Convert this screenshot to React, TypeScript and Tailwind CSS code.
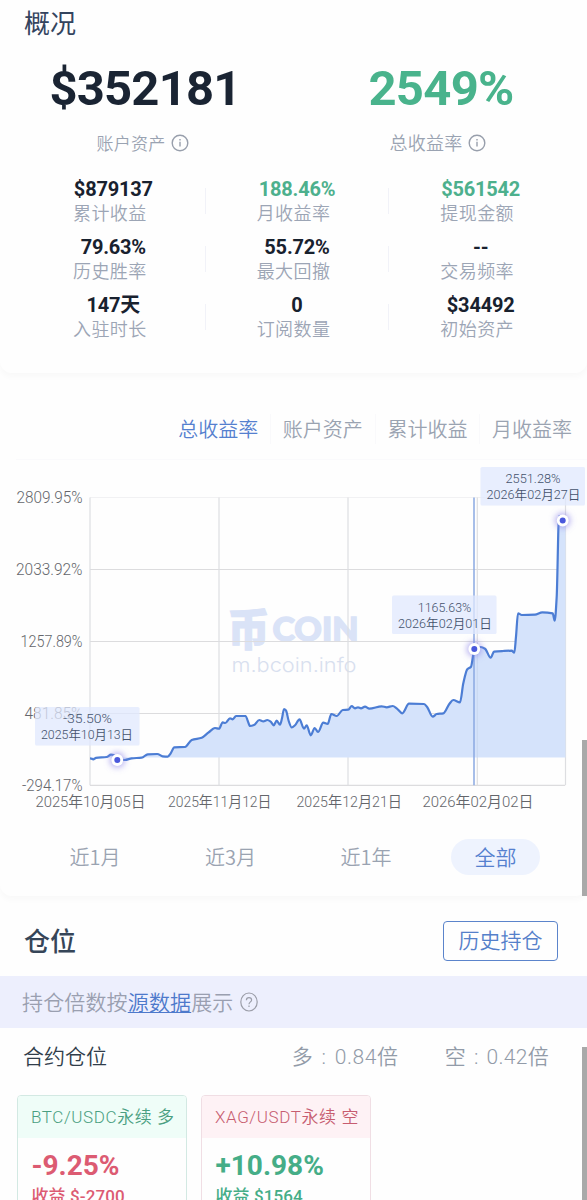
import React from 'react'

type Stat = {
    value: string
    label: string
    positive?: boolean
}

type Point = [number, number]

type Marker = {
    x: number
    y: number
    boxX: number
    boxY: number
    value: string
    valueWidth: number
    date: string
}

type Position = {
    pair: string
    percent: string
    profit: string
    side: 'long' | 'short'
    gain: boolean
}

const stats: Stat[][] = [
    [
        { value: '$879137', label: '累计收益' },
        { value: '188.46%', label: '月收益率', positive: true },
        { value: '$561542', label: '提现金额', positive: true },
    ],
    [
        { value: '79.63%', label: '历史胜率' },
        { value: '55.72%', label: '最大回撤' },
        { value: '--', label: '交易频率' },
    ],
    [
        { value: '147天', label: '入驻时长' },
        { value: '0', label: '订阅数量' },
        { value: '$34492', label: '初始资产' },
    ],
]

const tabs = ['总收益率', '账户资产', '累计收益', '月收益率']
const ranges = ['近1月', '近3月', '近1年', '全部']

const positions: Position[] = [
    { pair: 'BTC/USDC永续 多', percent: '-9.25%', profit: '收益 $-2700', side: 'long', gain: false },
    { pair: 'XAG/USDT永续 空', percent: '+10.98%', profit: '收益 $1564', side: 'short', gain: true },
]

// chart coordinates, relative to the top of the svg (y = 462 on the page)
const CHART_TOP = 462

const yAxis = [
    { label: '2809.95%', y: 497.5, x: 16.5, width: 66 },
    { label: '2033.92%', y: 569.5, x: 16, width: 66.5 },
    { label: '1257.89%', y: 641.5, x: 20.5, width: 62 },
    { label: '481.85%', y: 713.5, x: 24.5, width: 58 },
    { label: '-294.17%', y: 785.5, x: 22, width: 60.5 },
]

const xAxis = [
    { label: '2025年10月05日', x: 35.5, width: 110 },
    { label: '2025年11月12日', x: 168, width: 103.5 },
    { label: '2025年12月21日', x: 296.5, width: 105.5 },
    { label: '2026年02月02日', x: 422.5, width: 111 },
]

const series: Point[] = [
    [90, 758.3], [93.3, 759.3], [96, 757.9], [106.7, 757], [111, 754.7], [114, 755], [117.3, 760],
    [125, 760], [131.7, 758.3], [141.7, 757.7], [147.7, 754.3], [157.3, 754], [162.7, 756.3],
    [167.7, 756.7], [170.7, 753.3], [174.3, 747.3], [185, 747], [191.7, 740], [201.7, 737.7],
    [208.3, 732.7], [215, 728], [219, 728.7], [222.7, 722.3], [225.3, 723], [230, 718.3],
    [232.7, 719.3], [236, 716], [245.7, 716], [247.7, 720.7], [250, 726], [254, 725], [259.3, 720],
    [263.3, 721.3], [267.3, 720], [270.7, 721.7], [273.7, 725.3], [276.7, 720.7], [280, 724.7],
    [282, 718.3], [284, 709], [286, 710.5], [288.7, 721], [291.7, 727.5], [295, 725.3],
    [299.5, 719.3], [304, 728.7], [306.7, 725.3], [310.7, 735.3], [314.7, 728], [318, 732],
    [323.3, 722.7], [327.7, 724], [331.3, 714], [336.7, 716], [342.7, 710], [348.3, 709.7],
    [351.7, 706], [355, 708.3], [358, 707.3], [361, 708.3], [365, 706.7], [369.3, 708.7],
    [381.7, 706.3], [386.7, 707.3], [392.7, 706], [396.7, 708.3], [402.3, 713.3], [409, 703.7],
    [424, 704], [427.3, 707.3], [432.7, 716.7], [436.7, 714], [443.3, 713.3], [449.3, 704],
    [453.3, 700], [460, 702.3], [463.3, 683.3], [467.3, 669.3], [471, 666.7], [474.3, 650],
    [480.7, 647], [485, 648.7], [490.7, 657.7], [494, 651.7], [503, 651], [511.7, 650.7],
    [514.3, 652.7], [516, 636.7], [518, 613.3], [521.7, 615], [535, 614.7], [542.3, 612.3],
    [552.7, 613.3], [554.7, 620.7], [556.7, 596.7], [559, 516], [562.7, 520.7],
]

const markers: Marker[] = [
    { x: 117.3, y: 760, boxX: 35, boxY: 707, value: '-35.50%', valueWidth: 49, date: '2025年10月13日' },
    { x: 474.3, y: 649, boxX: 392, boxY: 595.5, value: '1165.63%', valueWidth: 53.5, date: '2026年02月01日' },
    { x: 562.7, y: 520.5, boxX: 480.5, boxY: 467, value: '2551.28%', valueWidth: 55, date: '2026年02月27日' },
]

// slope at a point, flat at local extremes so the curve never overshoots
function slopeAt(points: Point[], i: number) {
    if (i === 0 || i === points.length - 1) {
        return 0
    }
    const before = (points[i][1] - points[i - 1][1]) / (points[i][0] - points[i - 1][0])
    const after = (points[i + 1][1] - points[i][1]) / (points[i + 1][0] - points[i][0])
    if (before * after <= 0) {
        return 0
    }
    return (2 * before * after) / (before + after)
}

function smoothPath(points: Point[]) {
    let d = `M${points[0][0]} ${points[0][1]}`
    for (let i = 1; i < points.length; i++) {
        const [px, py] = points[i - 1]
        const [x, y] = points[i]
        const third = (x - px) / 3
        const y1 = py + slopeAt(points, i - 1) * third
        const y2 = y - slopeAt(points, i) * third
        d += ` C${px + third} ${y1} ${x - third} ${y2} ${x} ${y}`
    }
    return d
}

function InfoIcon({ className }: { className?: string }) {
    return (
        <svg className={className} width="18" height="18" viewBox="0 0 18 18" fill="none" stroke="#989fac" strokeWidth="1.4">
            <circle cx="9" cy="9" r="7.8" />
            <path d="M9 7.8v4.8M9 5v1.5" strokeWidth="1.4" />
        </svg>
    )
}

function HelpIcon() {
    return (
        <svg className="ml-[6px]" width="18" height="20" viewBox="0 0 18 20" fill="none" stroke="#9b9da8" strokeWidth="1.2">
            <ellipse cx="9" cy="10" rx="8.2" ry="9" />
            <path d="M6.4 8.2C6.4 6.5 7.5 5.6 9 5.6s2.6.9 2.6 2.4c0 1.8-2.6 2-2.6 4.2M9 13.4v1.5" />
        </svg>
    )
}

function Overview() {
    return (
        <section className="h-[373px] rounded-b-xl shadow-[0_4px_6px_rgba(0,0,0,0.025)]">
            <h2 className="h-[46px] pl-6 text-[26px] leading-[43px] font-normal text-[#34445e]">概况</h2>
            <div className="grid grid-cols-[284px_1fr] text-center">
                <div>
                    <div className="h-[84px] pl-[6px] font-[Roboto] text-[49px] leading-[85px] font-bold tracking-[-0.8px] text-[#1a2433]">$352181</div>
                    <div className="flex h-[27px] items-center justify-center pl-px">
                        <span className="-mt-[2px] text-[17px] tracking-[0.3px] text-[#9aa3b2]">账户资产</span>
                        <InfoIcon className="-mt-px ml-[5px]" />
                    </div>
                </div>
                <div>
                    <div className="h-[84px] pl-[11px] font-[Roboto] text-[49px] leading-[85px] font-bold tracking-[-0.7px] text-[#49b38c]">2549%</div>
                    <div className="flex h-[27px] items-center justify-center pl-1">
                        <span className="-mt-[2px] text-[18px] tracking-[0.3px] text-[#9aa3b2]">总收益率</span>
                        <InfoIcon className="-mt-px ml-[5px]" />
                    </div>
                </div>
            </div>
            <div className="mt-[19px] flex flex-col gap-2 px-[18px]">
                {stats.map((row, index) => (
                    <div key={index} className="grid h-[50px] grid-cols-3 text-center">
                        {row.map((stat, column) => (
                            <div key={stat.label} className="relative">
                                <div className={`h-[26px] pl-[7px] font-[Roboto,'Noto_Sans_CJK_SC'] text-[20px] leading-[26px] font-bold tracking-[-0.2px] ${stat.positive ? 'text-[#4db08d]' : 'text-[#18212e]'}`}>
                                    {stat.value}
                                </div>
                                <div className="h-6 text-[18px] leading-[21px] tracking-[0.4px] text-[#9ca5b5]">{stat.label}</div>
                                {column < 2 && (
                                    <span className="absolute top-[12px] right-[-4px] h-[26px] w-px bg-[#f1f2f8]" />
                                )}
                            </div>
                        ))}
                    </div>
                ))}
            </div>
        </section>
    )
}

function ProfitChart() {
    const line = smoothPath(series)
    return (
        <svg className="block" width="587" height="358" viewBox={`0 ${CHART_TOP} 587 358`} fill="none">
            <defs>
                <filter id="glow" x="-100%" y="-100%" width="300%" height="300%">
                    <feGaussianBlur stdDeviation="3" />
                </filter>
            </defs>

            {/* Watermark */}
            <g fill="#dae3f7">
                <text transform="translate(227.5 645.5) scale(1 1.06)" fontSize="42" fontWeight="900" fontFamily="'Noto Sans CJK SC', sans-serif" stroke="#dae3f7" strokeWidth="1">币</text>
                <text x="272.5" y="641" fontSize="32" fontWeight="900" fontFamily="Lato, sans-serif" stroke="#dae3f7" strokeWidth="1.4" textLength="86" lengthAdjust="spacingAndGlyphs">COIN</text>
                <text x="231.5" y="672" fontSize="20" fontFamily="Inter, sans-serif" fontWeight="350" textLength="125" lengthAdjust="spacingAndGlyphs" fill="#d8e0ef">m.bcoin.info</text>
            </g>

            {/* Grid */}
            <g stroke="#dcdcde" strokeWidth="1.2">
                <path d="M90 497.5H565" stroke="#f1f1f3" />
                <path d="M90 569.5H565M90 641.5H565M90 713.5H565M90 785.3H565" />
                <path d="M90 497.5V785.3M219 497.5V785.3M348 497.5V785.3M477.3 497.5V785.3M565.5 497.5V785.3" stroke="#dddee1" />
            </g>

            {/* Series */}
            <path d={`${line} L565.5 520.7 V757.5 H90 Z`} fill="#d5e3fb" />
            <path d="M477.3 650V757.5" stroke="#c9d8f1" />
            <path d="M474 497.5V785.3" stroke="#8aa9e2" strokeWidth="1.5" />
            <path d={line} stroke="#4c7dd4" strokeWidth="2.2" strokeLinejoin="round" />

            {/* Axis labels */}
            <g fill="#64666b" fontSize="16" fontFamily="Roboto, 'Noto Sans CJK SC', sans-serif" fontWeight="350">
                {yAxis.map((tick) => (
                    <text key={tick.label} x={tick.x} y={tick.y + 5.2} textLength={tick.width} lengthAdjust="spacingAndGlyphs">
                        {tick.label}
                    </text>
                ))}
                {xAxis.map((tick) => (
                    <text key={tick.label} x={tick.x} y="806.7" fontSize="15" textLength={tick.width} lengthAdjust="spacingAndGlyphs">
                        {tick.label}
                    </text>
                ))}
            </g>

            {/* Markers */}
            {markers.map((marker) => (
                <g key={marker.date}>
                    <rect x={marker.boxX} y={marker.boxY} width="104.5" height="38.5" rx="1.5" fill="#e0e8fd" fillOpacity="0.75" />
                    <g fill="#44526c" fontSize="13" fontFamily="Roboto, 'Noto Sans CJK SC', sans-serif">
                        <text x={marker.boxX + 52.5 - marker.valueWidth / 2} y={marker.boxY + 16.3} textLength={marker.valueWidth} lengthAdjust="spacingAndGlyphs">
                            {marker.value}
                        </text>
                        <text x={marker.boxX + 6} y={marker.boxY + 32} textLength={marker.date === '2025年10月13日' ? 92 : 94} lengthAdjust="spacingAndGlyphs">
                            {marker.date}
                        </text>
                    </g>
                    <circle cx={marker.x} cy={marker.y} r="7.5" fill="#8a7fe8" fillOpacity="0.65" filter="url(#glow)" />
                    <circle cx={marker.x} cy={marker.y} r="5.9" fill="#fff" />
                    <circle cx={marker.x} cy={marker.y} r="3" fill="#4a58dc" />
                </g>
            ))}
        </svg>
    )
}

function ChartSection() {
    return (
        <section className="relative h-[523px] rounded-b-xl pt-[26px] shadow-[0_4px_6px_rgba(0,0,0,0.025)]">
            <div className="ml-4 flex h-[61px] items-center justify-end border-b border-[#fafafc] pr-[15px]">
                {tabs.map((tab, index) => (
                    <div
                        key={tab}
                        className={`text-[20px] ${index === 0
                            ? 'text-[#5580cf]'
                            : 'ml-3 border-l border-[#f9f9fb] pl-[11.6px] text-[#9aa3b1]'}`}
                    >
                        {tab}
                    </div>
                ))}
            </div>
            <div className="mt-[2px]">
                <ProfitChart />
            </div>
            <div className="mt-[19px] grid grid-cols-[136px_135px_136px_123px] pl-[27px] text-center text-[20px] leading-[35px]">
                {ranges.map((range, index) => (
                    <div key={range} className="flex h-9 justify-center">
                        <span className={index === 3
                            ? 'w-[89px] rounded-full bg-[#eef3fe] text-[21px] text-[#5580cf]'
                            : 'text-[#9aa3b1]'}
                        >
                            {range}
                        </span>
                    </div>
                ))}
            </div>
            <span className="absolute right-0 bottom-0 h-[156px] w-[5px] bg-[#a9a9a9]" />
        </section>
    )
}

function PositionCard({ position }: { position: Position }) {
    const long = position.side === 'long'
    return (
        <div className={`h-[170px] w-[170px] shrink-0 overflow-hidden rounded-[4px] border ${long ? 'border-[#d3e9e3]' : 'border-[#f0dee4]'}`}>
            <div className={`h-[42px] pl-[13px] font-[Roboto,'Noto_Sans_CJK_SC'] text-[17px] leading-[42px] tracking-[0.6px] whitespace-nowrap ${long ? 'bg-[#effdf8] text-[#4a9f81]' : 'bg-[#fef2f5] text-[#c75d70]'}`}>
                {position.pair}
            </div>
            <div className={`pl-[13.5px] font-[Roboto,'Noto_Sans_CJK_SC'] font-bold ${position.gain ? 'text-[#45ad87]' : 'text-[#dc5b72]'}`}>
                <div className="h-[44px] pt-[9px] text-[28px] leading-[37px]">{position.percent}</div>
                <div className="pt-[2px] text-[17px] leading-6 font-medium tracking-[0.1px]">{position.profit}</div>
            </div>
        </div>
    )
}

function Positions() {
    return (
        <section className="relative h-[304px]">
            <div className="flex h-[80px] items-center justify-between pt-[10px] pr-[29px] pl-6">
                <h2 className="-mt-[4px] text-[26px] font-medium text-[#364558]">仓位</h2>
                <button className="h-10 w-[115px] rounded-[4px] border-[1.5px] border-[#5b84cb] pb-[3px] text-[21px] leading-[33px] text-[#5580ca]">历史持仓</button>
            </div>
            <div className="flex h-[52px] items-center bg-[#edeffd] pl-[22px] text-[21px] tracking-[0.15px] text-[#9a9fb0]">
                <span>
                    持仓倍数按
                    <a className="text-[#4d79cb] underline decoration-1 underline-offset-2">源数据</a>
                    展示
                </span>
                <HelpIcon />
            </div>
            <div className="flex h-[60px] items-center pr-[38px] pl-[23px] font-[Roboto,'Noto_Sans_CJK_SC'] text-[21px] text-[#929ba8]">
                <span className="flex-1 text-[#303d4a]">合约仓位</span>
                <span className="tracking-[0.6px] [word-spacing:2.5px]">多 : 0.84倍</span>
                <span className="ml-[46px] tracking-[0.3px] [word-spacing:2.5px]">空 : 0.42倍</span>
            </div>
            <div className="mt-[7px] flex gap-[14px] pl-[17px]">
                {positions.map((position) => (
                    <PositionCard key={position.pair} position={position} />
                ))}
            </div>
            <span className="absolute right-0 bottom-0 h-[153px] w-[5px] bg-[#a9a9a9]" />
        </section>
    )
}

export default function App() {
    return (
        <main className="h-[1200px] w-[587px] overflow-hidden bg-[#fefefe] font-['Noto_Sans_CJK_SC',sans-serif] font-[350]">
            <Overview />
            <ChartSection />
            <Positions />
        </main>
    )
}
